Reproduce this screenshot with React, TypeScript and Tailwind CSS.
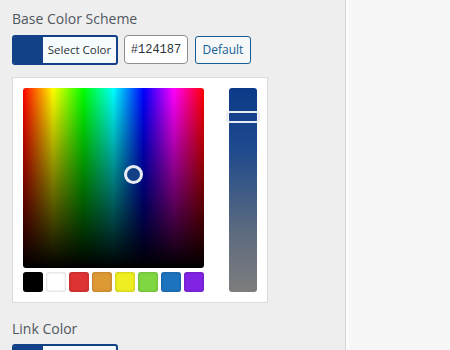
const SWATCHES = [
  "#000000",
  "#ffffff",
  "#dd3333",
  "#dd9933",
  "#eeee22",
  "#81d742",
  "#1e73be",
  "#8224e3",
];

function ColorButton({ color }: { color: string }) {
  return (
    <div className="flex h-[30px] w-[106px] overflow-hidden rounded-[3px] border-2 border-[#124187] bg-[#f6fbfd]">
      <div className="w-[29px] shrink-0" style={{ background: color }} />
      <div className="flex flex-1 items-center justify-center text-[11.5px] text-[#2c3338]">
        Select Color
      </div>
    </div>
  );
}

function Picker() {
  return (
    <div className="mt-[12px] flex h-[226px] w-[256px] gap-[25px] border border-[#dcdcde] bg-white p-[10px]">
      <div className="flex flex-col gap-[4px]">
        <div
          className="relative h-[181px] w-[181px] overflow-hidden rounded-[3px]"
          style={{
            background:
              "linear-gradient(to bottom, rgba(0,0,0,0), #000), linear-gradient(to right, #ff0000, #ffff00, #00ff00, #00ffff, #0000ff, #ff00ff, #ff0000)",
          }}
        >
          <div className="absolute left-[101px] top-[77px] h-[19px] w-[19px] rounded-full border-[3px] border-[#e8ecf2] bg-[#124187]" />
        </div>
        <div className="flex gap-[3px]">
          {SWATCHES.map((c) => (
            <div
              key={c}
              className="h-[20px] w-[20px] rounded-[3px] shadow-[inset_0_0_3px_rgba(0,0,0,0.25)]"
              style={{ background: c }}
            />
          ))}
        </div>
      </div>
      <div className="relative">
        <div className="h-[204px] w-[28px] rounded-[3px] bg-[linear-gradient(to_bottom,#0c3a88,#1e4a8e_30%,#5c6a80_70%,#7d7d7d)]" />
        <div className="absolute left-[-3px] top-[23px] h-[12px] w-[34px] rounded-[4px] border-2 border-[#e8ecf2]" />
      </div>
    </div>
  );
}

export default function App() {
  return (
    <div
      className="flex h-[350px] w-[450px] overflow-hidden bg-[#f7f7f7]"
      style={{ fontFamily: '"Open Sans", "Noto Sans", sans-serif' }}
    >
      <div className="w-[346px] shrink-0 border-r border-[#d4d4d4] bg-[#eeeeee] pl-[12px] pt-[9px]">
        <div className="text-[14px] leading-[20px] text-[#50575e]">
          Base Color Scheme
        </div>
        <div className="mt-[6px] flex items-start gap-[6px]">
          <ColorButton color="#124187" />
          <div className="flex h-[29px] w-[64px] items-center justify-center rounded-[4px] border border-[#8c8f94] bg-white text-[12px] text-[#2c3338] [font-family:'Liberation_Mono',monospace]">
            #124187
          </div>
          <div className="ml-[1px] mt-[1px] flex h-[28px] w-[56px] items-center justify-center rounded-[3px] border border-[#135e96] bg-[#f6f7f7] text-[12px] text-[#135e96]">
            Default
          </div>
        </div>
        <Picker />
        <div className="mt-[16px] text-[14px] leading-[20px] text-[#50575e]">
          Link Color
        </div>
        <div className="mt-[5px]">
          <ColorButton color="#124187" />
        </div>
      </div>
      <div className="flex-1 border-l-[3px] border-[#fbfbfb]" />
    </div>
  );
}
